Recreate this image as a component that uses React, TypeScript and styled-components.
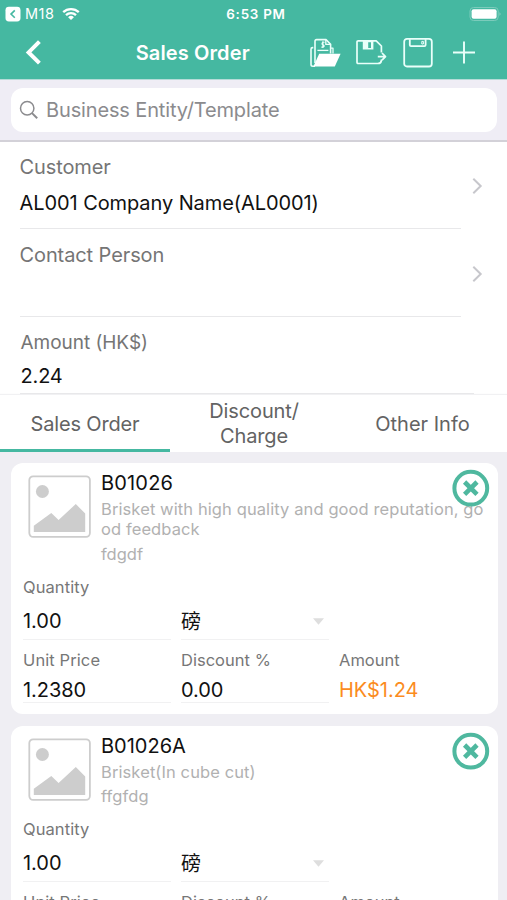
import React from "react";
import styled, { createGlobalStyle } from "styled-components";

const GREEN = "#45b8a1";
const SURFACE = "#efeef3";

const GlobalStyle = createGlobalStyle`
  * { box-sizing: border-box; }
  body {
    margin: 0;
    background: ${SURFACE};
    font-family: Inter, "Noto Sans CJK SC", sans-serif;
    color: #111;
  }
  svg { display: block; flex: none; }
`;

const Screen = styled.div`
  width: 507px;
  height: 900px;
  overflow: hidden;
  display: flex;
  flex-direction: column;
  background: ${SURFACE};
`;

const Header = styled.header`
  flex: none;
  height: 80px;
  background: ${GREEN};
  color: #fff;
  border-bottom: 1px solid #b5dcd8;
`;

const StatusBar = styled.div`
  height: 27px;
  display: grid;
  grid-template-columns: 1fr auto 1fr;
  align-items: center;
  padding: 1px 5px 0;
  line-height: 18px;
`;

const StatusLeft = styled.div`
  display: flex;
  align-items: center;
`;

const Carrier = styled.span`
  margin: 0 8px 0 4px;
  font-size: 14.5px;
  letter-spacing: 0.5px;
`;

const Clock = styled.span`
  padding-left: 5px;
  font-size: 13.4px;
  font-weight: 600;
  letter-spacing: 0.75px;
`;

const StatusRight = styled.div`
  display: flex;
  justify-content: flex-end;
`;

const NavBar = styled.nav`
  height: 51px;
  display: flex;
  align-items: center;
  padding: 0 32px 0 25px;
`;

const NavTitle = styled.h1`
  margin: 0 0 0 93.7px;
  font-size: 20px;
  line-height: 24px;
  font-weight: 600;
  letter-spacing: 0.12px;
`;

const NavActions = styled.div`
  margin-left: auto;
  display: flex;
  align-items: center;
  gap: 15.5px;
`;

const SearchArea = styled.div`
  flex: none;
  height: 62px;
  padding: 8px 10px 0 11px;
  background: #efedf5;
  border-bottom: 2px solid #d3d1d8;
`;

const SearchBox = styled.div`
  height: 44px;
  display: flex;
  align-items: center;
  gap: 7px;
  padding: 0 0 1px 8px;
  border-radius: 12px;
  background: #fff;
  color: #8b8b8e;
  font-size: 20px;
  line-height: 24px;
  letter-spacing: -0.14px;
`;

const Form = styled.section`
  flex: none;
  height: 253px;
  display: flex;
  flex-direction: column;
  padding-left: 20px;
  background: #fff;
`;

const FormRow = styled.div<{ $height: number }>`
  flex: none;
  height: ${(p) => p.$height}px;
  display: flex;
  align-items: center;
`;

const Field = styled.div<{ $width?: number; $heavy?: boolean; $top?: number; $inset?: number }>`
  width: ${(p) => p.$width ?? 441}px;
  height: 100%;
  padding-top: ${(p) => p.$top ?? 14}px;
  padding-left: ${(p) => p.$inset ?? 0}px;
  border-bottom: ${(p) => (p.$heavy ? "2px solid #e6e6e8" : "1px solid #e8e8ea")};
`;

const Disclosure = styled.div`
  padding: 1px 0 0 11px;
`;

const FieldLabel = styled.div<{ $size?: number; $ls?: number }>`
  margin-left: -0.5px;
  font-size: ${(p) => p.$size ?? 20}px;
  line-height: 24px;
  letter-spacing: ${(p) => p.$ls ?? -0.1}px;
  color: #757575;
`;

const FieldValue = styled.div<{ $gap: number; $ls?: number }>`
  margin: ${(p) => p.$gap}px 0 0 -0.4px;
  font-size: 20px;
  line-height: 24px;
  letter-spacing: ${(p) => p.$ls ?? -0.09}px;
`;

const Tabs = styled.div`
  flex: none;
  height: 57px;
  display: grid;
  grid-template-columns: 170px 168px 169px;
  background: #fff;
  box-shadow: 0 -1px 1px #f1f1f3;
`;

const Tab = styled.div<{ $active?: boolean; $ls?: number; $top?: number }>`
  display: flex;
  align-items: center;
  justify-content: center;
  text-align: center;
  padding-top: ${(p) => p.$top ?? 0}px;
  font-size: 20px;
  line-height: 24.5px;
  letter-spacing: ${(p) => p.$ls ?? 0}px;
  color: #636363;
  border-bottom: ${(p) => (p.$active ? `3px solid ${GREEN}` : "0")};
`;

const CardList = styled.main`
  display: flex;
  flex-direction: column;
  gap: 12px;
  padding: 11px 9.5px 0 10.5px;
`;

const Card = styled.article`
  position: relative;
  flex: none;
  padding-bottom: 11px;
  border-radius: 12px;
  background: #fff;
`;

const CardHead = styled.div`
  display: flex;
  gap: 10px;
  padding: 8px 0 0 17.5px;
`;

const Thumb = styled.div`
  padding-top: 4px;
`;

const Code = styled.div<{ $ls: number }>`
  font-size: 20px;
  line-height: 24px;
  letter-spacing: ${(p) => p.$ls}px;
`;

const Description = styled.div<{ $ls: number }>`
  margin-top: 4px;
  font-size: 16.5px;
  line-height: 20.3px;
  letter-spacing: ${(p) => p.$ls}px;
  color: #b1b1b1;
  white-space: pre;
`;

const Note = styled(Description)`
  line-height: 20px;
`;

const RemoveButton = styled.div`
  position: absolute;
  top: 6px;
  right: 8px;
`;

const Cells = styled.div<{ $top: number }>`
  display: grid;
  grid-template-columns: 148px 148px 1fr;
  column-gap: 10px;
  align-items: end;
  padding-left: 12.5px;
  margin-top: ${(p) => p.$top}px;
`;

const Cell = styled.div<{ $lined?: boolean; $pad: number }>`
  padding-bottom: ${(p) => p.$pad}px;
  border-bottom: 1px solid ${(p) => (p.$lined ? "#f1f1f2" : "transparent")};
`;

const CellLabel = styled.div<{ $ls?: number }>`
  font-size: 16.5px;
  line-height: 20px;
  letter-spacing: ${(p) => p.$ls ?? 0}px;
  color: #777;
`;

const CellValue = styled.div<{ $gap: number; $accent?: boolean; $ls?: number }>`
  display: flex;
  align-items: center;
  justify-content: space-between;
  height: 24px;
  margin-top: ${(p) => p.$gap}px;
  padding-right: 5px;
  font-size: 20px;
  line-height: 24px;
  letter-spacing: ${(p) => p.$ls ?? -0.04}px;
  color: ${(p) => (p.$accent ? "#fb8c1e" : "#111")};
`;

const BackBadge = () => (
  <svg width="16" height="16" viewBox="0 0 16 16">
    <rect x="0.5" y="0.8" width="15" height="14.6" rx="3.4" fill="#fff" />
    <path d="M9.8 4.4 6 8.1l3.8 3.7" fill="none" stroke={GREEN} strokeWidth="1.6" />
  </svg>
);

const Wifi = () => (
  <svg width="18" height="14" viewBox="0 0 18 14">
    <g fill="none" stroke="#fff" strokeWidth="2.3">
      <path d="M1.2 5.2a11.2 11.2 0 0 1 15.6 0" />
      <path d="M4 8.2a7.2 7.2 0 0 1 10 0" />
    </g>
    <path d="M9 13.1 6.1 10.2a4.2 4.2 0 0 1 5.8 0z" fill="#fff" />
  </svg>
);

const Battery = () => (
  <svg width="33" height="16" viewBox="0 0 33 16">
    <rect x="1" y="1.5" width="28.2" height="13" rx="3.5" fill="none" stroke="#7bcbbb" strokeWidth="1" />
    <rect x="2.6" y="3.2" width="25" height="9.6" rx="2" fill="#fff" />
    <path d="M30.6 6q1.8 2 0 4z" fill="#a6dccf" />
  </svg>
);

const BackChevron = () => (
  <svg width="17" height="26" viewBox="0 0 17 26">
    <path d="M14.4 1.6 3.6 12.4 14.4 23.2" fill="none" stroke="#fff" strokeWidth="4" />
  </svg>
);

const OpenFolder = () => (
  <svg width="31" height="30" viewBox="0 0 31 30">
    <g fill="none" stroke="#eafffa" strokeWidth="1.6" strokeLinejoin="round">
      <path d="M3.3 9.6H2.6Q1 9.6 1 11.2V26.5Q1 28.2 2.8 28.2H5" />
      <path d="M5 25V3.2Q5 1.6 6.6 1.6H16L20.6 6.2V15.5" />
      <path d="M15.8 1.8V6.4H20.4" strokeWidth="1.3" />
      <path d="M20.8 10.2H23V15.5" strokeWidth="1.3" />
      <path d="M7.4 12.4H18.4" strokeWidth="1.3" />
      <path d="M14.5 4.4C12 3.6 11.3 6.4 13 6.8 15 7.3 14.3 9.8 11.3 9M12.9 3.3V10.1" strokeWidth="1.2" />
    </g>
    <path d="M9.2 15.8H30.6L24.8 28.6H3.4z" fill="#fff" />
  </svg>
);

const SaveExport = () => (
  <svg width="31" height="30" viewBox="0 0 31 30">
    <g fill="none" stroke="#eafffa" strokeWidth="1.7" strokeLinejoin="round">
      <path d="M25.4 21.5V22.4Q25.2 25.5 21.8 25.5H2.2Q1 25.5 1 24.2V4.1Q1 2.8 2.2 2.8H20.2L25.4 8V14.6" />
      <path d="M21.8 18.6H29M26 15 29.5 18.6 26 22.2" />
    </g>
    <path fillRule="evenodd" d="M6.8 2.8H17.4V11.6H6.8zM12.2 4.2H15V9.9H12.2z" fill="#eafffa" />
  </svg>
);

const Save = () => (
  <svg width="30" height="30" viewBox="0 0 30 30">
    <g fill="none" stroke="#eafffa" strokeWidth="1.8" strokeLinejoin="round">
      <rect x="1.2" y="0.9" width="27.6" height="27.6" rx="2.8" />
      <path d="M6.8 1.2V7.1Q6.8 8.2 8 8.2H21.4Q22.6 8.2 22.6 7.1V1.2" />
      <path d="M18.8 3.4H20.4V6H18.8z" strokeWidth="1" />
    </g>
  </svg>
);

const Plus = () => (
  <svg width="27" height="30" viewBox="0 0 27 30">
    <path d="M5 14.5H27M16 3.5V25.5" stroke="#eafffa" strokeWidth="1.9" />
  </svg>
);

const Magnifier = () => (
  <svg width="20" height="20" viewBox="0 0 20 20" fill="none" stroke="#8b8b8e">
    <circle cx="8.2" cy="8.3" r="6.7" strokeWidth="1.5" />
    <path d="M13 13.1 18.2 18.2" strokeWidth="2" />
  </svg>
);

const ChevronRight = () => (
  <svg width="12" height="18" viewBox="0 0 12 18">
    <path d="M1.3 1.7 8.7 9 1.3 16.3" fill="none" stroke="#c7c7cc" strokeWidth="2" />
  </svg>
);

const Caret = () => (
  <svg width="11" height="7" viewBox="0 0 11 7">
    <path d="M0 .2H11L5.5 6.8z" fill="#dedede" />
  </svg>
);

const Placeholder = () => (
  <svg width="63" height="63" viewBox="0 0 63 63">
    <rect x="1.3" y="1.3" width="60.6" height="60.6" rx="3.8" fill="none" stroke="#cdcdcd" strokeWidth="1.8" />
    <circle cx="14.4" cy="16.5" r="6.5" fill="#cdcdcd" />
    <path d="M5.8 57V50.8L23.3 38 30.6 45 47.8 29 57.2 38.6V57z" fill="#cdcdcd" />
  </svg>
);

const RemoveIcon = () => (
  <svg width="38" height="38" viewBox="0 0 38 38" fill="none" stroke="#4fb89f">
    <circle cx="18.8" cy="19.2" r="16.4" strokeWidth="4" />
    <path d="M12.6 13 25 25.4M25 13 12.6 25.4" strokeWidth="4.6" />
  </svg>
);

type Item = {
  code: string;
  codeSpacing: number;
  description: string;
  descriptionSpacing: number;
  note: string;
  noteSpacing: number;
};

const items: Item[] = [
  {
    code: "B01026",
    codeSpacing: 0.17,
    description: "Brisket with high quality and good reputation, go\nod feedback",
    descriptionSpacing: 0.1,
    note: "fdgdf",
    noteSpacing: 0,
  },
  {
    code: "B01026A",
    codeSpacing: 0,
    description: "Brisket(In cube cut)",
    descriptionSpacing: 0.1,
    note: "ffgfdg",
    noteSpacing: 0.1,
  },
];

const OrderCard = ({ item }: { item: Item }) => (
  <Card>
    <CardHead>
      <Thumb>
        <Placeholder />
      </Thumb>
      <div>
        <Code $ls={item.codeSpacing}>{item.code}</Code>
        <Description $ls={item.descriptionSpacing}>{item.description}</Description>
        <Note $ls={item.noteSpacing}>{item.note}</Note>
      </div>
    </CardHead>
    <RemoveButton>
      <RemoveIcon />
    </RemoveButton>
    <Cells $top={13}>
      <Cell $lined $pad={6}>
        <CellLabel $ls={0.07}>Quantity</CellLabel>
        <CellValue $gap={12}>1.00</CellValue>
      </Cell>
      <Cell $lined $pad={5}>
        <CellValue $gap={0}>
          磅
          <Caret />
        </CellValue>
      </Cell>
    </Cells>
    <Cells $top={10}>
      <Cell $lined $pad={0}>
        <CellLabel $ls={0.1}>Unit Price</CellLabel>
        <CellValue $gap={8}>1.2380</CellValue>
      </Cell>
      <Cell $lined $pad={0}>
        <CellLabel $ls={0.02}>Discount %</CellLabel>
        <CellValue $gap={8}>0.00</CellValue>
      </Cell>
      <Cell $pad={0}>
        <CellLabel $ls={0}>Amount</CellLabel>
        <CellValue $gap={8} $accent>
          HK$1.24
        </CellValue>
      </Cell>
    </Cells>
  </Card>
);

export default function App() {
  return (
    <>
      <GlobalStyle />
      <Screen>
        <Header>
          <StatusBar>
            <StatusLeft>
              <BackBadge />
              <Carrier>M18</Carrier>
              <Wifi />
            </StatusLeft>
            <Clock>6:53 PM</Clock>
            <StatusRight>
              <Battery />
            </StatusRight>
          </StatusBar>
          <NavBar>
            <BackChevron />
            <NavTitle>Sales Order</NavTitle>
            <NavActions>
              <OpenFolder />
              <SaveExport />
              <Save />
              <Plus />
            </NavActions>
          </NavBar>
        </Header>

        <SearchArea>
          <SearchBox>
            <Magnifier />
            Business Entity/Template
          </SearchBox>
        </SearchArea>

        <Form>
          <FormRow $height={87}>
            <Field $top={13}>
              <FieldLabel $ls={-0.1}>Customer</FieldLabel>
              <FieldValue $gap={12}>AL001 Company Name(AL0001)</FieldValue>
            </Field>
            <Disclosure>
              <ChevronRight />
            </Disclosure>
          </FormRow>
          <FormRow $height={88}>
            <Field>
              <FieldLabel>Contact Person</FieldLabel>
            </Field>
            <Disclosure>
              <ChevronRight />
            </Disclosure>
          </FormRow>
          <FormRow $height={78}>
            <Field $width={454} $heavy $inset={1}>
              <FieldLabel $size={19} $ls={-0.04}>
                Amount (HK$)
              </FieldLabel>
              <FieldValue $gap={9} $ls={-0.2}>
                2.24
              </FieldValue>
            </Field>
          </FormRow>
        </Form>

        <Tabs>
          <Tab $active $ls={-0.16} $top={5}>
            Sales Order
          </Tab>
          <Tab $ls={-0.1}>
            Discount/
            <br />
            Charge
          </Tab>
          <Tab $top={2}>Other Info</Tab>
        </Tabs>

        <CardList>
          {items.map((item) => (
            <OrderCard key={item.code} item={item} />
          ))}
        </CardList>
      </Screen>
    </>
  );
}
